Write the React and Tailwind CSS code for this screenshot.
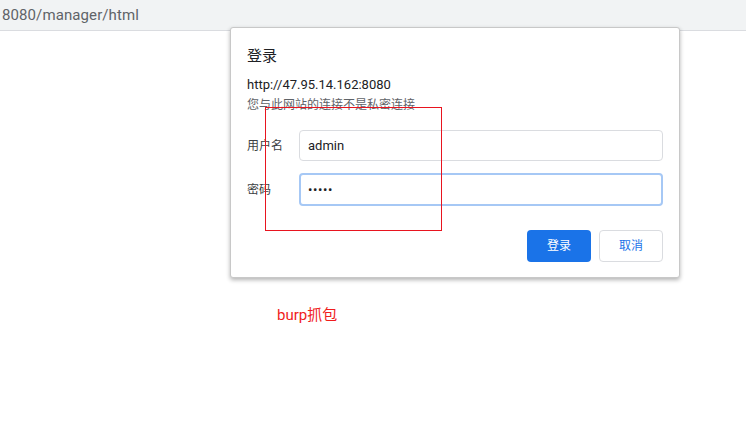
export default function App() {
  return (
    <div
      className="relative w-[746px] h-[442px] overflow-hidden bg-white"
      style={{ fontFamily: '"Segoe UI", Roboto, "Noto Sans CJK SC", sans-serif' }}
    >
      {/* address bar */}
      <div className="h-[31px] bg-[#f1f3f4] border-b border-[#dadce0] flex items-center">
        <span className="pl-[2px] text-[15px] text-[#5f6368] tracking-[0.1px]">8080/manager/html</span>
      </div>

      {/* page body */}
      <div className="pl-[277px] pt-[272px]">
        <span className="text-[15px] text-[#f01c1c]">burp抓包</span>
      </div>

      {/* auth dialog */}
      <div className="absolute left-[230px] top-[27px] w-[450px] h-[251px] bg-white border border-[#c8c8c8] rounded-[3px] shadow-[0_2px_4px_rgba(0,0,0,0.3)] pt-[18px] px-[16px]">
        <div className="text-[15px] text-[#202124] leading-[20px]">登录</div>
        <div className="mt-[11px] text-[13px] text-[#202124] leading-[16px]">http://47.95.14.162:8080</div>
        <div className="mt-[4px] text-[12px] text-[#5f6368] leading-[16px]">您与此网站的连接不是私密连接</div>

        <div className="mt-[17px] flex items-center">
          <span className="w-[52px] text-[12px] text-[#3c4043]">用户名</span>
          <div className="flex-1 h-[31px] border border-[#dadce0] rounded-[4px] flex items-center px-[8px] text-[13px] text-[#202124]">
            admin
          </div>
        </div>
        <div className="mt-[12px] flex items-center">
          <span className="w-[52px] text-[12px] text-[#3c4043]">密码</span>
          <div className="flex-1 h-[33px] border-[2px] border-[#a6c8f5] rounded-[4px] flex items-center px-[7px] text-[13px] text-[#202124] tracking-[0.6px]">
            •••••
          </div>
        </div>

        <div className="mt-[24px] flex justify-end gap-[8px]">
          <button className="w-[64px] h-[32px] rounded-[4px] bg-[#1a73e8] text-white text-[12px]">登录</button>
          <button className="w-[64px] h-[32px] rounded-[4px] border border-[#dadce0] bg-white text-[#1a73e8] text-[12px]">取消</button>
        </div>
      </div>

      {/* red annotation box */}
      <div className="absolute left-[265px] top-[107px] w-[177px] h-[124px] border border-[#e8141f]" />
    </div>
  );
}
